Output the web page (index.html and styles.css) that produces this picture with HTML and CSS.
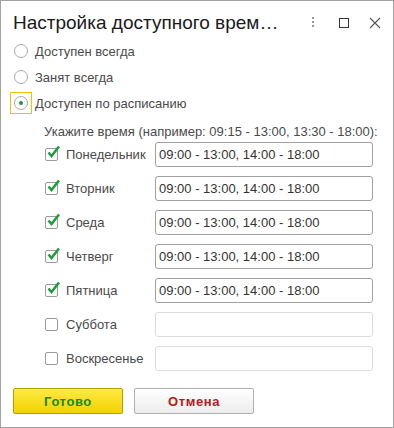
FILE: index.html
```
<!DOCTYPE html>
<html lang="ru">
<head>
    <meta charset="UTF-8">
    <title>Настройка доступного времени</title>
    <link rel="stylesheet" href="styles.css">
</head>
<body>
    <div class="window">
        <!-- Title bar -->
        <div class="titlebar">
            <div class="title">Настройка доступного врем…</div>
            <div class="tools">
                <svg class="tool" width="12" height="12" viewBox="0 0 12 12">
                    <rect x="5" y="0" width="2" height="2" fill="#999"/>
                    <rect x="5" y="4" width="2" height="2" fill="#999"/>
                    <rect x="5" y="8" width="2" height="2" fill="#999"/>
                </svg>
                <svg class="tool" width="12" height="12" viewBox="0 0 12 12">
                    <rect x="1.5" y="1.5" width="9" height="9" fill="none" stroke="#333" stroke-width="1"/>
                </svg>
                <svg class="tool" width="12" height="12" viewBox="0 0 12 12">
                    <path d="M1 1 L11 11 M11 1 L1 11" stroke="#555" stroke-width="1.1" fill="none"/>
                </svg>
            </div>
        </div>

        <!-- Mode -->
        <div class="radio-row">
            <span class="radio-box"><span class="radio"></span></span>
            <span class="radio-label">Доступен всегда</span>
        </div>
        <div class="radio-row">
            <span class="radio-box"><span class="radio"></span></span>
            <span class="radio-label">Занят всегда</span>
        </div>
        <div class="radio-row">
            <span class="radio-box focused"><span class="radio checked"></span></span>
            <span class="radio-label">Доступен по расписанию</span>
        </div>

        <div class="hint">Укажите время (например: 09:15 - 13:00, 13:30 - 18:00):</div>

        <!-- Days -->
        <div class="days" id="days"></div>

        <div class="buttons">
            <button class="btn btn-ok">Готово</button>
            <button class="btn btn-cancel">Отмена</button>
        </div>
    </div>

    <script>
        const days = [
            { name: "Понедельник", on: true },
            { name: "Вторник", on: true },
            { name: "Среда", on: true },
            { name: "Четверг", on: true },
            { name: "Пятница", on: true },
            { name: "Суббота", on: false },
            { name: "Воскресенье", on: false }
        ];

        const check = '<svg width="16" height="15" viewBox="0 0 16 15"><path d="M3.5 7.5 L6.5 11 L14 1.5" stroke="#1e9e3c" stroke-width="2.6" fill="none"/></svg>';

        const list = document.getElementById("days");
        days.forEach((day) => {
            const row = document.createElement("div");
            row.className = "day-row";
            row.innerHTML = `
                <span class="checkbox">${day.on ? check : ""}</span>
                <span class="day-label">${day.name}</span>
                <input class="time-input${day.on ? "" : " disabled"}" type="text" value="${day.on ? "09:00 - 13:00, 14:00 - 18:00" : ""}">
            `;
            list.appendChild(row);
        });
    </script>
</body>
</html>
```

FILE: styles.css
```
body {
    margin: 0;
    padding: 0;
    font-family: "Liberation Sans", Arial, sans-serif;
    background-color: #fff;
}

.window {
    width: 394px;
    height: 428px;
    box-sizing: border-box;
    border: 1px solid #a3a3a3;
    background-color: #fff;
}

.titlebar {
    display: flex;
    align-items: center;
    height: 37px;
    padding: 6px 0 0 12px;
    box-sizing: border-box;
}

.title {
    flex: 1;
    font-size: 19px;
    color: #1a1a1a;
    white-space: nowrap;
}

.tools {
    display: flex;
    align-items: center;
    gap: 19px;
    margin-right: 12px;
}

.tool {
    display: block;
}

.radio-row {
    display: flex;
    align-items: center;
    height: 26px;
    font-size: 13px;
    color: #4a4a4a;
}

.radio-box {
    display: flex;
    align-items: center;
    justify-content: center;
    width: 20px;
    height: 20px;
    margin-left: 9px;
    border: 1px solid transparent;
}

.radio-box.focused {
    border-color: #f2c200;
}

.radio {
    width: 12px;
    height: 12px;
    border: 1px solid #a8a8a8;
    border-radius: 50%;
    background-color: #fff;
    position: relative;
}

.radio.checked::after {
    content: "";
    position: absolute;
    left: 4px;
    top: 4px;
    width: 4px;
    height: 4px;
    border-radius: 50%;
    background-color: #1a9a3a;
}

.radio-label {
    margin-left: 3px;
}

.hint {
    height: 26px;
    box-sizing: border-box;
    padding: 8px 0 0 43px;
    font-size: 13px;
    color: #4a4a4a;
}

.days {
    display: flex;
    flex-direction: column;
    gap: 9px;
}

.day-row {
    display: flex;
    align-items: center;
    height: 25px;
    font-size: 13px;
    color: #4a4a4a;
}

.checkbox {
    position: relative;
    width: 11px;
    height: 11px;
    margin-left: 44px;
    border: 1px solid #9a9a9a;
    border-radius: 2px;
    background-color: #fff;
}

.checkbox svg {
    position: absolute;
    left: -1px;
    top: -4px;
}

.day-label {
    width: 89px;
    margin-left: 8px;
}

.time-input {
    width: 218px;
    height: 25px;
    box-sizing: border-box;
    padding: 0 3px;
    border: 1px solid #a0a0a0;
    border-radius: 3px;
    font-family: "Liberation Sans", Arial, sans-serif;
    font-size: 13px;
    color: #333;
    outline: none;
}

.time-input.disabled {
    border-color: #dcdcdc;
}

.buttons {
    display: flex;
    gap: 11px;
    margin: 17px 0 0 12px;
}

.btn {
    height: 26px;
    box-sizing: border-box;
    border-radius: 2px;
    font-family: "Liberation Sans", Arial, sans-serif;
    font-size: 13px;
    font-weight: bold;
    letter-spacing: 0.6px;
    padding: 0;
}

.btn-ok {
    width: 110px;
    border: 1px solid #b5a000;
    background: linear-gradient(#ffea44, #f2d200);
    color: #158a15;
}

.btn-cancel {
    width: 120px;
    border: 1px solid #b0b0b0;
    background: linear-gradient(#ffffff, #ececec);
    color: #b01c1c;
}
```
